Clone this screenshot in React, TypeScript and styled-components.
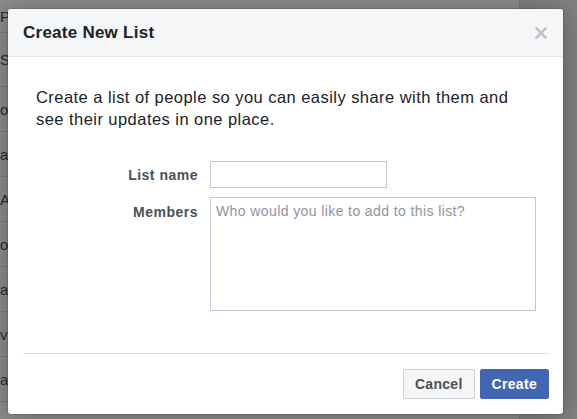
import React from 'react';
import styled, { createGlobalStyle } from 'styled-components';

const GlobalStyle = createGlobalStyle`
    html, body {
        margin: 0;
        padding: 0;
        background: #ffffff;
        font-family: "Liberation Sans", Arial, Helvetica, sans-serif;
    }
`;

interface IRow {
    text: string;
    height: number;
}

const rows: IRow[] = [
    { text: 'P', height: 33 },
    { text: 'S', height: 54 },
    { text: 'ot', height: 45 },
    { text: 'a', height: 45 },
    { text: 'A', height: 45 },
    { text: 'o', height: 45 },
    { text: 'a', height: 45 },
    { text: 'va', height: 45 },
    { text: 'a', height: 45 },
];

const CloseIcon = () => (
    <svg width="12" height="12" viewBox="0 0 12 12">
        <path d="M1.5 1.5 L10.5 10.5 M10.5 1.5 L1.5 10.5" stroke="#bec3c9" strokeWidth="2.6" strokeLinecap="square" />
    </svg>
);

const App = () => (
    <>
        <GlobalStyle />
        <Page>
            <Feed>
                {rows.map((row, i) => (
                    <FeedRow key={i} $height={row.height}>
                        <FeedText>{row.text}</FeedText>
                    </FeedRow>
                ))}
            </Feed>
            <RightRail />
            <Backdrop />
            <Dialog>
                <Header>
                    <Title>Create New List</Title>
                    <CloseBtn aria-label="Close">
                        <CloseIcon />
                    </CloseBtn>
                </Header>
                <Body>
                    <Intro>
                        Create a list of people so you can easily share with them and see their updates in one place.
                    </Intro>
                    <Form>
                        <Label $top={false}>List name</Label>
                        <NameInput type="text" />
                        <Label $top>Members</Label>
                        <MembersArea placeholder="Who would you like to add to this list?" />
                    </Form>
                </Body>
                <Footer>
                    <FooterBar>
                        <Button $primary={false}>Cancel</Button>
                        <Button $primary>Create</Button>
                    </FooterBar>
                </Footer>
            </Dialog>
        </Page>
    </>
);

export default App;

const Page = styled.div`
    position: relative;
    width: 577px;
    height: 419px;
    overflow: hidden;
    display: grid;
    grid-template-columns: 519px 1fr;
    background: #ffffff;
`;

const Feed = styled.div`
    display: flex;
    flex-direction: column;
`;

const FeedRow = styled.div<{ $height: number }>`
    height: ${(p) => p.$height}px;
    flex-shrink: 0;
    border-bottom: 1px solid #dddfe2;
    box-sizing: border-box;
    display: flex;
    align-items: center;
`;

const FeedText = styled.span`
    font-size: 15px;
    color: #4b4f56;
`;

const RightRail = styled.div`
    background: #e9ebee;
    border-left: 1px solid #dddfe2;
`;

const Backdrop = styled.div`
    position: absolute;
    inset: 0;
    background: rgba(0, 0, 0, 0.45);
`;

const Dialog = styled.div`
    position: absolute;
    left: 8px;
    top: 9px;
    width: 555px;
    background: #ffffff;
    border-radius: 3px;
    box-shadow: 0 2px 26px rgba(0, 0, 0, 0.3), 0 0 0 1px rgba(0, 0, 0, 0.1);
    overflow: hidden;
`;

const Header = styled.div`
    height: 47px;
    background: #f5f6f7;
    border-bottom: 1px solid #e5e5e5;
    display: flex;
    align-items: center;
    justify-content: space-between;
    padding: 0 16px 0 15px;
`;

const Title = styled.h3`
    margin: 0;
    font-size: 17px;
    letter-spacing: 0.25px;
    font-weight: bold;
    color: #1d2129;
`;

const CloseBtn = styled.button`
    border: 0;
    background: none;
    padding: 0;
    width: 12px;
    height: 12px;
    display: flex;
    cursor: pointer;
`;

const Body = styled.div`
    padding: 29px 28px 42px;
`;

const Intro = styled.p`
    margin: 0 0 31px;
    font-size: 16.5px;
    letter-spacing: 0.45px;
    line-height: 22px;
    color: #1d2129;
`;

const Form = styled.div`
    display: grid;
    grid-template-columns: 162px auto;
    column-gap: 12px;
    row-gap: 9px;
    justify-items: start;
`;

const Label = styled.label<{ $top: boolean }>`
    justify-self: end;
    align-self: ${(p) => (p.$top ? 'start' : 'center')};
    padding-top: ${(p) => (p.$top ? '6px' : '0')};
    font-size: 14px;
    letter-spacing: 0.5px;
    line-height: 18px;
    font-weight: bold;
    color: #4b4f56;
`;

const NameInput = styled.input`
    box-sizing: border-box;
    width: 177px;
    height: 27px;
    border: 1px solid #bdc7d8;
    padding: 3px 5px;
    font-family: inherit;
    font-size: 14px;
    outline: none;
`;

const MembersArea = styled.textarea`
    box-sizing: border-box;
    width: 326px;
    height: 114px;
    border: 1px solid #bdc7d8;
    padding: 4px 5px;
    font-family: inherit;
    font-size: 14px;
    letter-spacing: 0.4px;
    line-height: 18px;
    resize: none;
    outline: none;

    &::placeholder {
        color: #90949c;
    }
`;

const Footer = styled.div`
    padding: 0 14px 15px 15px;
`;

const FooterBar = styled.div`
    border-top: 1px solid #dddfe2;
    padding-top: 15px;
    display: flex;
    justify-content: flex-end;
    gap: 5px;
`;

const Button = styled.button<{ $primary: boolean }>`
    height: 30px;
    padding: 0 11px;
    border-radius: 2px;
    border: 1px solid ${(p) => (p.$primary ? '#4267b2' : '#ced0d4')};
    background: ${(p) => (p.$primary ? '#4267b2' : '#f5f6f7')};
    color: ${(p) => (p.$primary ? '#ffffff' : '#4b4f56')};
    font-family: inherit;
    font-size: 14px;
    letter-spacing: 0.3px;
    font-weight: bold;
    cursor: pointer;
`;
